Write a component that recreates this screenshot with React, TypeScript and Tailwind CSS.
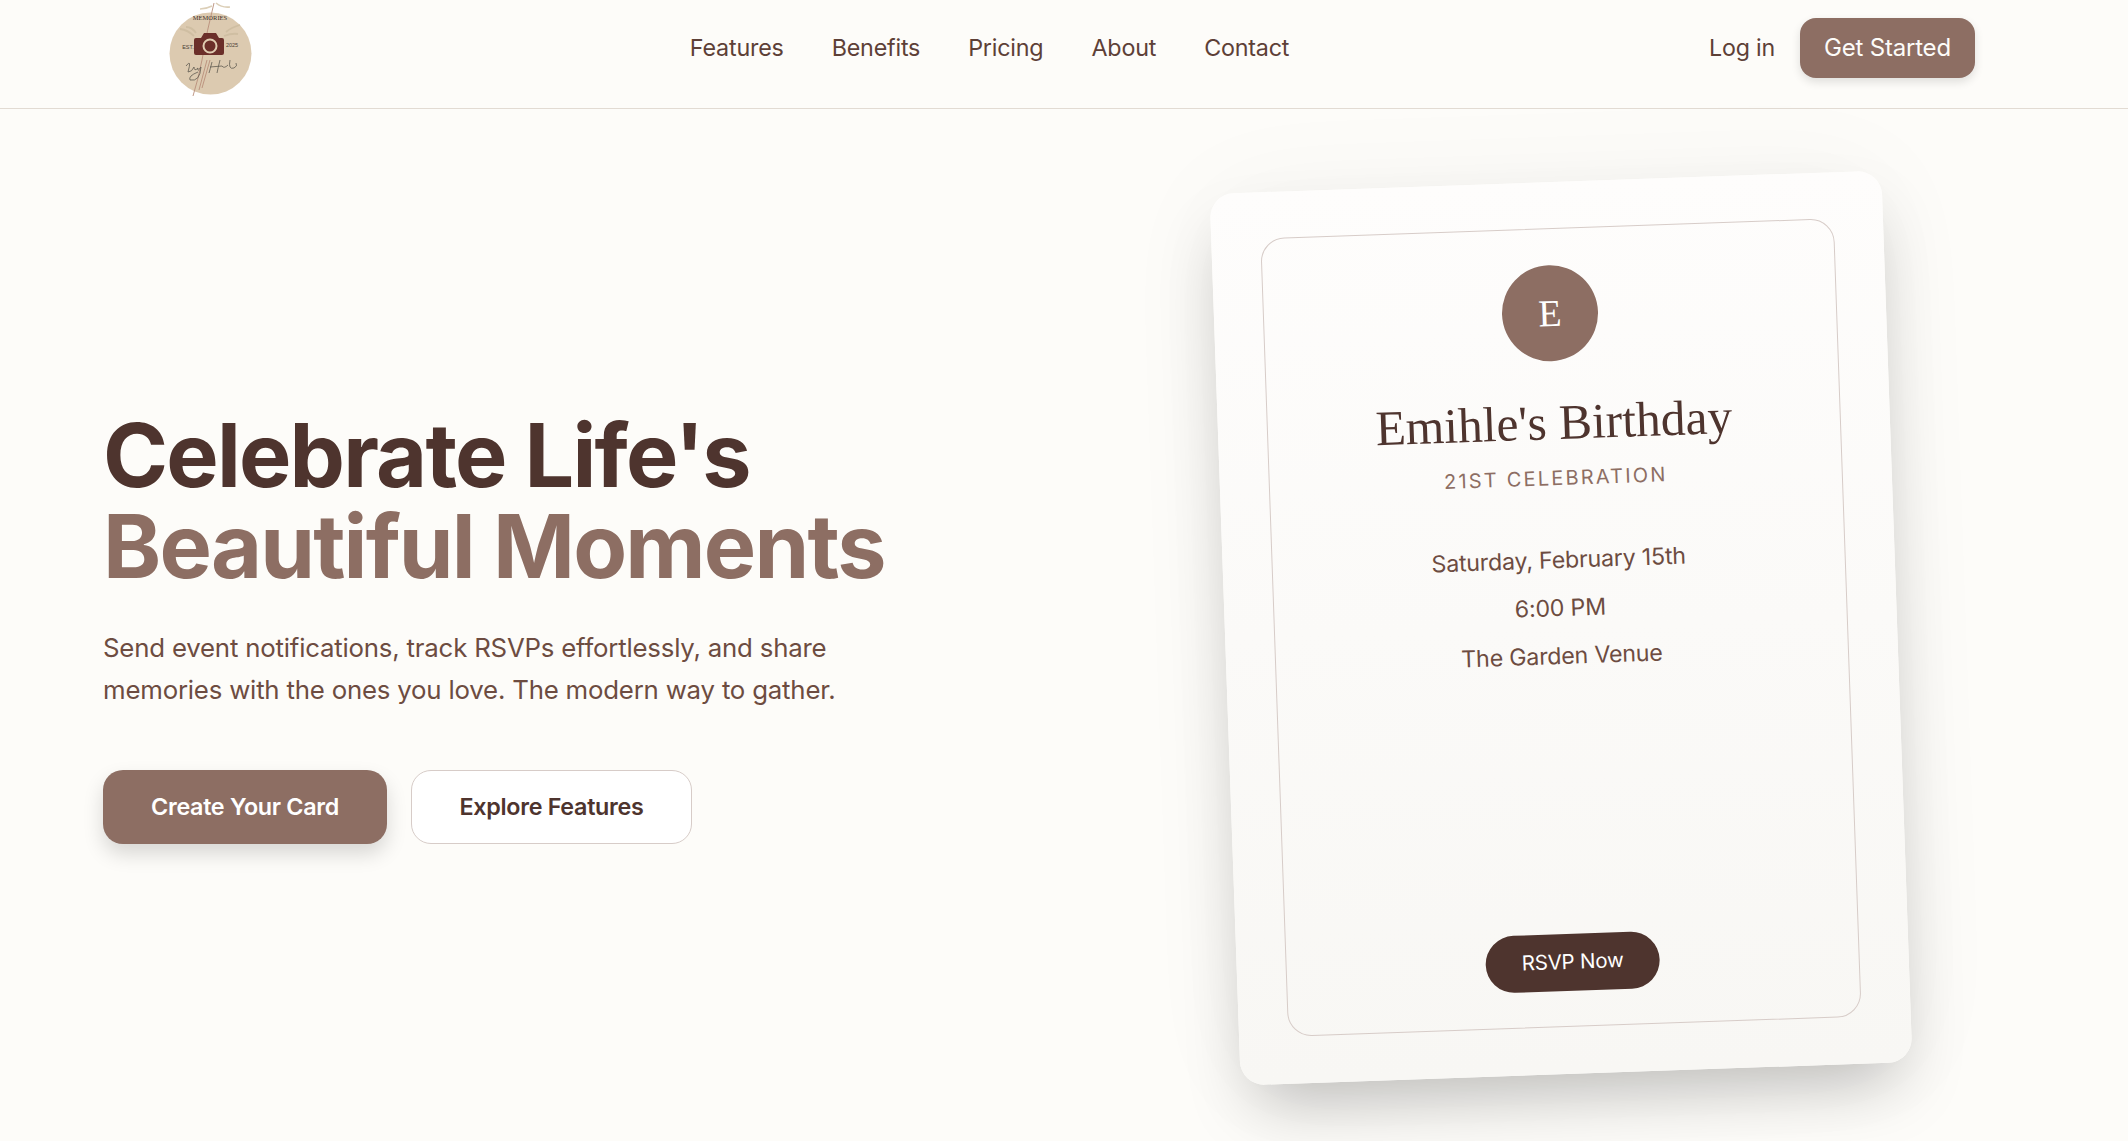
const SANS = "font-['Inter','Liberation_Sans',sans-serif]";

const navLinks = ["Features", "Benefits", "Pricing", "About", "Contact"];

function Logo() {
  return (
    <div className="flex h-[108px] w-[120px] shrink-0 items-center justify-center self-start bg-white">
      <svg width="120" height="108" viewBox="0 0 120 108">
        <circle cx="60.5" cy="53.5" r="41" fill="#dccab0" />
        {/* pampas grass */}
        <path d="M44 36 Q38 30 30 29 M46 33 Q42 27 36 27 M76 32 Q82 27 90 25 M74 36 Q82 33 88 34" stroke="#cfbea2" strokeWidth="1.8" fill="none" />
        <path d="M64 3 Q57 30 52 60 Q48 80 43 96 M57 60 L49 90 M60 60 L52 88" stroke="#b98f7b" strokeWidth="0.9" fill="none" />
        <path d="M66 3 Q72 8 80 7 M62 6 Q56 9 50 9" stroke="#dccfb8" strokeWidth="1.6" fill="none" />
        {/* camera */}
        <path d="M44 40 Q44 38 46 38 H51 L54 33 H66 L69 38 H72 Q74 38 74 40 V53 Q74 55 72 55 H46 Q44 55 44 53 Z" fill="#6b2f2a" />
        <circle cx="60" cy="46" r="6.5" fill="none" stroke="#e0cdb2" strokeWidth="2" />
        {/* signature */}
        <path d="M36 66 Q42 58 38 72 Q42 72 44 67 Q44 72 48 68 Q47 73 51 67 M51 67 Q50 82 40 80 Q38 76 48 72 M62 62 Q60 70 59 73 M70 60 Q68 68 67 73 M60 67 L72 66 Q74 69 78 65 M80 60 Q78 70 84 68 Q88 66 86 63" stroke="#5f5a50" strokeWidth="0.8" fill="none" />
        <text x="60" y="20" textAnchor="middle" fontSize="6.5" fontFamily="Liberation Serif, serif" fill="#3f332a">MEMORIES</text>
        <text x="38" y="49" textAnchor="middle" fontSize="5.5" fontFamily="Liberation Sans, sans-serif" fill="#4a3f35">EST.</text>
        <text x="82" y="47" textAnchor="middle" fontSize="5.5" fontFamily="Liberation Sans, sans-serif" fill="#4a3f35">2025</text>
      </svg>
    </div>
  );
}

function Header() {
  return (
    <header className="flex h-[109px] items-center justify-between border-b border-[#e2dbd3] pr-[153px] pb-[12px] pl-[150px]">
      <Logo />
      <nav className="flex items-center gap-[48px]">
        {navLinks.map((link) => (
          <a key={link} className="text-[23.3px] leading-[32px] tracking-[-0.2px] text-[#5d4037]">
            {link}
          </a>
        ))}
      </nav>
      <div className="flex items-center gap-[25px]">
        <a className="text-[23.2px] leading-[32px] tracking-[-0.2px] text-[#5d4037]">Log in</a>
        <button className="h-[60px] w-[175px] rounded-[16px] bg-[#8d6e63] text-[24px] tracking-[-0.2px] text-[#fdfcf9] shadow-[0_4px_10px_rgba(0,0,0,0.12)]">
          Get Started
        </button>
      </div>
    </header>
  );
}

function InviteCard() {
  return (
    <div className="flex h-[892px] w-[672px] rotate-[-2deg] rounded-[24px] bg-gradient-to-b from-[#fefdfc] to-[#f8f7f4] px-[49px] pt-[46px] pb-[47px] shadow-[0_33px_66px_-16px_rgba(0,0,0,0.25),0_0_110px_rgba(0,0,0,0.04)]">
      <div className="flex flex-1 flex-col items-center rounded-[24px] border border-[#d7ccc8] pt-[36px] pb-[35px]">
        <div className="flex h-[96px] w-[96px] items-center justify-center rounded-full bg-[#8d6e63] font-['Liberation_Serif',serif] text-[38px] text-white">
          E
        </div>
        <h2 className="mt-[33px] font-['Liberation_Serif',serif] text-[49.5px] leading-[58px] text-[#4e342e]">
          Emihle's Birthday
        </h2>
        <p className="mt-[12px] text-[20px] leading-[28px] tracking-[2.2px] text-[#8d6e63] uppercase">21st Celebration</p>
        <div className="mt-[52px] flex flex-col items-center gap-[16px] text-[23.2px] leading-[32px] tracking-[-0.2px] text-[#6d4c41]">
          <p>Saturday, February 15th</p>
          <p>6:00 PM</p>
          <p>The Garden Venue</p>
        </div>
        <button className="mt-auto h-[57px] w-[174px] rounded-full bg-[#4e342e] text-[20.5px] tracking-[-0.2px] text-white">
          RSVP Now
        </button>
      </div>
    </div>
  );
}

function Hero() {
  return (
    <section className="grid min-h-[1032px] grid-cols-2 items-center gap-[64px] pr-[103px] pl-[103px]">
      <div className="pt-[4px]">
        <h1 className="text-[88px] leading-[91px] font-bold tracking-[-1.8px] text-[#4e342e]">
          Celebrate Life's
          <br />
          <span className="text-[#8d6e63]">Beautiful Moments</span>
        </h1>
        <p className="mt-[35px] text-[25.8px] leading-[42px] tracking-[-0.2px] text-[#6d4c41]">
          Send event notifications, track RSVPs effortlessly, and share
          <br />
          memories with the ones you love. The modern way to gather.
        </p>
        <div className="mt-[59px] flex gap-[24px]">
          <button className="h-[74px] w-[284px] rounded-[20px] bg-[#8d6e63] text-[23.3px] font-semibold tracking-[-0.3px] text-white shadow-[0_10px_20px_rgba(0,0,0,0.15)]">
            Create Your Card
          </button>
          <button className="h-[74px] w-[281px] rounded-[20px] border border-[#d7ccc8] bg-white text-[23.3px] font-semibold tracking-[-0.3px] text-[#4e342e]">
            Explore Features
          </button>
        </div>
      </div>
      <div className="flex justify-center pt-[6px]">
        <InviteCard />
      </div>
    </section>
  );
}

export default function App() {
  return (
    <div className={`min-h-[1141px] overflow-hidden bg-[#fdfcf9] ${SANS}`}>
      <Header />
      <Hero />
    </div>
  );
}
